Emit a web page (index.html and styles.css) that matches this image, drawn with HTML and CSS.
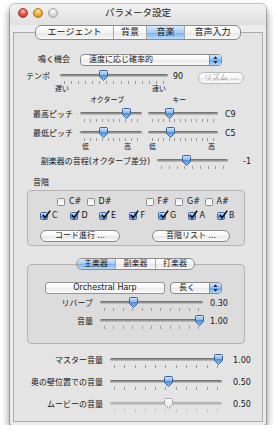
FILE: index.html
```html
<!DOCTYPE html>
<html lang="ja">
<head>
    <meta charset="UTF-8">
    <title>パラメータ設定</title>
    <link rel="stylesheet" href="styles.css">
</head>
<body>
    <!-- shared gradients for slider knobs -->
    <svg class="defs" width="0" height="0">
        <defs>
            <linearGradient id="kb" x1="0" y1="0" x2="0" y2="1">
                <stop offset="0" stop-color="#d6e8fb"/>
                <stop offset="0.45" stop-color="#86b7ee"/>
                <stop offset="0.5" stop-color="#4d8ee0"/>
                <stop offset="1" stop-color="#9ccaf6"/>
            </linearGradient>
            <linearGradient id="kg" x1="0" y1="0" x2="0" y2="1">
                <stop offset="0" stop-color="#ffffff"/>
                <stop offset="1" stop-color="#e2e2e2"/>
            </linearGradient>
        </defs>
    </svg>

    <div class="window">
        <div class="titlebar">
            <div class="lights">
                <span class="light red"></span>
                <span class="light yellow"></span>
                <span class="light gray"></span>
            </div>
            <div class="title">パラメータ設定</div>
            <div></div>
        </div>

        <div class="seg main-tabs">
            <span class="t-agent">エージェント</span>
            <span class="t-bg">背景</span>
            <span class="t-music on">音楽</span>
            <span class="t-voice">音声入力</span>
        </div>

        <div class="pane">
            <!-- 鳴く機会 -->
            <div class="row row-chance">
                <span class="lbl">鳴く機会</span>
                <div class="popup p-chance">
                    <span>速度に応じ確率的</span>
                    <i class="arrows"><svg viewBox="0 0 5 8" width="5" height="8"><path d="M2.5 0.3 L4.6 3 H0.4Z M0.4 5 H4.6 L2.5 7.7Z"/></svg></i>
                </div>
            </div>

            <!-- テンポ -->
            <div class="row row-tempo">
                <span class="lbl">テンポ</span>
                <div class="slider s-tempo">
                    <div class="track"></div>
                    <div class="rail">
                        <div class="ticks"><i></i><i></i><i></i><i></i><i></i><i></i><i></i><i></i><i></i><i></i><i></i><i></i><i></i><i></i><i></i></div>
                        <svg class="thumb" style="left:39%" viewBox="0 0 9 11"><path d="M1.5 0.5 H7.5 Q8.5 0.5 8.5 1.5 V6.5 L4.5 10.5 L0.5 6.5 V1.5 Q0.5 0.5 1.5 0.5Z"/></svg>
                    </div>
                </div>
                <span class="val v-tempo">90</span>
                <span class="pill off b-rhythm">リズム ...</span>
            </div>
            <div class="cap cap-speed"><span>遅い</span><span>速い</span></div>
            <div class="cap cap-pitch"><span>オクターブ</span><span>キー</span></div>

            <!-- ピッチ -->
            <div class="row row-pitch">
                <span class="lbl">最高ピッチ</span>
                <div class="slider s-oct">
                    <div class="track"></div>
                    <div class="rail">
                        <div class="ticks"><i></i><i></i><i></i><i></i><i></i><i></i><i></i><i></i><i></i><i></i></div>
                        <svg class="thumb" style="left:78%" viewBox="0 0 9 11"><path d="M1.5 0.5 H7.5 Q8.5 0.5 8.5 1.5 V6.5 L4.5 10.5 L0.5 6.5 V1.5 Q0.5 0.5 1.5 0.5Z"/></svg>
                    </div>
                </div>
                <div class="slider s-key">
                    <div class="track"></div>
                    <div class="rail">
                        <div class="ticks"><i></i><i></i><i></i><i></i><i></i><i></i><i></i><i></i><i></i><i></i><i></i><i></i></div>
                        <svg class="thumb" style="left:27%" viewBox="0 0 9 11"><path d="M1.5 0.5 H7.5 Q8.5 0.5 8.5 1.5 V6.5 L4.5 10.5 L0.5 6.5 V1.5 Q0.5 0.5 1.5 0.5Z"/></svg>
                    </div>
                </div>
                <span class="val v-pitch">C9</span>
            </div>
            <div class="row row-pitch">
                <span class="lbl">最低ピッチ</span>
                <div class="slider s-oct">
                    <div class="track"></div>
                    <div class="rail">
                        <div class="ticks"><i></i><i></i><i></i><i></i><i></i><i></i><i></i><i></i><i></i><i></i></div>
                        <svg class="thumb" style="left:35%" viewBox="0 0 9 11"><path d="M1.5 0.5 H7.5 Q8.5 0.5 8.5 1.5 V6.5 L4.5 10.5 L0.5 6.5 V1.5 Q0.5 0.5 1.5 0.5Z"/></svg>
                    </div>
                </div>
                <div class="slider s-key">
                    <div class="track"></div>
                    <div class="rail">
                        <div class="ticks"><i></i><i></i><i></i><i></i><i></i><i></i><i></i><i></i><i></i><i></i><i></i><i></i></div>
                        <svg class="thumb" style="left:29%" viewBox="0 0 9 11"><path d="M1.5 0.5 H7.5 Q8.5 0.5 8.5 1.5 V6.5 L4.5 10.5 L0.5 6.5 V1.5 Q0.5 0.5 1.5 0.5Z"/></svg>
                    </div>
                </div>
                <span class="val v-pitch">C5</span>
            </div>
            <div class="cap cap-lowhigh"><span>低</span><span>高</span><span>低</span><span>高</span></div>

            <!-- 副楽器 -->
            <div class="row row-sub">
                <span class="lbl">副楽器の音程(オクターブ差分)</span>
                <div class="slider s-sub">
                    <div class="track"></div>
                    <div class="rail">
                        <div class="ticks"><i></i><i></i><i></i><i></i><i></i><i></i><i></i><i></i><i></i></div>
                        <svg class="thumb" style="left:40%" viewBox="0 0 9 11"><path d="M1.5 0.5 H7.5 Q8.5 0.5 8.5 1.5 V6.5 L4.5 10.5 L0.5 6.5 V1.5 Q0.5 0.5 1.5 0.5Z"/></svg>
                    </div>
                </div>
                <span class="val v-sub">-1</span>
            </div>

            <!-- 音階 -->
            <div class="group-title">音階</div>
            <div class="group">
                <div class="keys black">
                    <label class="cb"><span class="box"></span>C#</label>
                    <label class="cb"><span class="box"></span>D#</label>
                    <span></span>
                    <label class="cb"><span class="box"></span>F#</label>
                    <label class="cb"><span class="box"></span>G#</label>
                    <label class="cb"><span class="box"></span>A#</label>
                </div>
                <div class="keys white">
                    <label class="cb on"><span class="box"><svg viewBox="0 0 10 10"><path d="M1.8 4.6 L4 7.8 L9.2 0.6"/></svg></span>C</label>
                    <label class="cb on"><span class="box"><svg viewBox="0 0 10 10"><path d="M1.8 4.6 L4 7.8 L9.2 0.6"/></svg></span>D</label>
                    <label class="cb on"><span class="box"><svg viewBox="0 0 10 10"><path d="M1.8 4.6 L4 7.8 L9.2 0.6"/></svg></span>E</label>
                    <label class="cb on"><span class="box"><svg viewBox="0 0 10 10"><path d="M1.8 4.6 L4 7.8 L9.2 0.6"/></svg></span>F</label>
                    <label class="cb on"><span class="box"><svg viewBox="0 0 10 10"><path d="M1.8 4.6 L4 7.8 L9.2 0.6"/></svg></span>G</label>
                    <label class="cb on"><span class="box"><svg viewBox="0 0 10 10"><path d="M1.8 4.6 L4 7.8 L9.2 0.6"/></svg></span>A</label>
                    <label class="cb on"><span class="box"><svg viewBox="0 0 10 10"><path d="M1.8 4.6 L4 7.8 L9.2 0.6"/></svg></span>B</label>
                </div>
                <div class="group-buttons">
                    <span class="pill b-chord">コード進行 ...</span>
                    <span class="pill b-scale">音階リスト ...</span>
                </div>
            </div>

            <!-- 楽器 -->
            <div class="seg inst-tabs">
                <span class="t-main on">主楽器</span>
                <span class="t-sub">副楽器</span>
                <span class="t-perc">打楽器</span>
            </div>
            <div class="inst-pane">
                <div class="row row-inst">
                    <span class="inst-name">Orchestral Harp</span>
                    <div class="popup p-len">
                        <span>長く</span>
                        <i class="arrows"><svg viewBox="0 0 5 8" width="5" height="8"><path d="M2.5 0.3 L4.6 3 H0.4Z M0.4 5 H4.6 L2.5 7.7Z"/></svg></i>
                    </div>
                </div>
                <div class="row row-inner">
                    <span class="lbl">リバーブ</span>
                    <div class="slider s-inner">
                        <div class="track"></div>
                        <div class="rail">
                            <div class="ticks"><i></i><i></i><i></i><i></i><i></i><i></i><i></i><i></i><i></i><i></i><i></i></div>
                            <svg class="thumb" style="left:30%" viewBox="0 0 9 11"><path d="M1.5 0.5 H7.5 Q8.5 0.5 8.5 1.5 V6.5 L4.5 10.5 L0.5 6.5 V1.5 Q0.5 0.5 1.5 0.5Z"/></svg>
                        </div>
                    </div>
                    <span class="val v-inner">0.30</span>
                </div>
                <div class="row row-inner">
                    <span class="lbl">音量</span>
                    <div class="slider s-inner">
                        <div class="track"></div>
                        <div class="rail">
                            <div class="ticks"><i></i><i></i><i></i><i></i><i></i><i></i><i></i><i></i><i></i><i></i><i></i></div>
                            <svg class="thumb" style="left:100%" viewBox="0 0 9 11"><path d="M1.5 0.5 H7.5 Q8.5 0.5 8.5 1.5 V6.5 L4.5 10.5 L0.5 6.5 V1.5 Q0.5 0.5 1.5 0.5Z"/></svg>
                        </div>
                    </div>
                    <span class="val v-inner">1.00</span>
                </div>
            </div>

            <!-- 全体の音量 -->
            <div class="row row-vol first">
                <span class="lbl">マスター音量</span>
                <div class="slider s-vol">
                    <div class="track"></div>
                    <div class="rail">
                        <div class="ticks"><i></i><i></i><i></i><i></i><i></i><i></i><i></i><i></i><i></i><i></i><i></i></div>
                        <svg class="thumb" style="left:100%" viewBox="0 0 9 11"><path d="M1.5 0.5 H7.5 Q8.5 0.5 8.5 1.5 V6.5 L4.5 10.5 L0.5 6.5 V1.5 Q0.5 0.5 1.5 0.5Z"/></svg>
                    </div>
                </div>
                <span class="val v-vol">1.00</span>
            </div>
            <div class="row row-vol">
                <span class="lbl">奥の壁位置での音量</span>
                <div class="slider s-vol">
                    <div class="track"></div>
                    <div class="rail">
                        <div class="ticks"><i></i><i></i><i></i><i></i><i></i><i></i><i></i><i></i><i></i><i></i><i></i></div>
                        <svg class="thumb" style="left:52%" viewBox="0 0 9 11"><path d="M1.5 0.5 H7.5 Q8.5 0.5 8.5 1.5 V6.5 L4.5 10.5 L0.5 6.5 V1.5 Q0.5 0.5 1.5 0.5Z"/></svg>
                    </div>
                </div>
                <span class="val v-vol">0.50</span>
            </div>
            <div class="row row-vol">
                <span class="lbl">ムービーの音量</span>
                <div class="slider s-vol disabled">
                    <div class="track"></div>
                    <div class="rail">
                        <div class="ticks"><i></i><i></i><i></i><i></i><i></i><i></i><i></i><i></i><i></i><i></i><i></i></div>
                        <svg class="thumb" style="left:52%" viewBox="0 0 9 11"><path d="M1.5 0.5 H7.5 Q8.5 0.5 8.5 1.5 V6.5 L4.5 10.5 L0.5 6.5 V1.5 Q0.5 0.5 1.5 0.5Z"/></svg>
                    </div>
                </div>
                <span class="val v-vol">0.50</span>
            </div>
        </div>
    </div>
</body>
</html>
```

FILE: styles.css
```css
body {
    margin: 0;
    background: #fff;
    font-family: "DejaVu Sans", "Noto Sans CJK JP", sans-serif;
    font-size: 8px;
    color: #151515;
}
.defs {
    position: absolute;
}

/* window frame */
.window {
    width: 256px;
    height: 421px;
    margin: 4px 0 0 10px;
    background: #ececec;
    border-radius: 5px 5px 2px 2px;
    box-shadow: 0 0 0 1px rgba(0,0,0,0.2), 0 5px 9px rgba(0,0,0,0.55);
}
.titlebar {
    height: 21px;
    display: grid;
    grid-template-columns: 1fr auto 1fr;
    background: linear-gradient(#f2f2f2, #e0e0e0);
    border-radius: 5px 5px 0 0;
}
.lights {
    display: flex;
    gap: 5px;
    padding: 4px 0 0 8px;
}
.light {
    width: 10px;
    height: 10px;
    border-radius: 50%;
    box-sizing: border-box;
}
.light.red {
    background: radial-gradient(circle at 50% 30%, #ffc2b8 0, #e8594d 45%, #b8261c 100%);
    border: 1px solid #9e3a32;
}
.light.yellow {
    background: radial-gradient(circle at 50% 30%, #ffe6a8 0, #f0b43a 45%, #c47d10 100%);
    border: 1px solid #a47624;
}
.light.gray {
    background: radial-gradient(circle at 50% 30%, #ffffff 0, #dadada 50%, #b8b8b8 100%);
    border: 1px solid #a3a3a3;
}
.title {
    font-size: 9.5px;
    line-height: 13px;
    padding-top: 2px;
    color: #222;
}

/* segmented tabs */
.seg {
    display: flex;
    box-sizing: border-box;
    border: 1px solid #8a8a8a;
    border-radius: 6px;
    overflow: hidden;
    background: linear-gradient(#ffffff, #f3f3f3 50%, #e5e5e5 51%, #f8f8f8);
    position: relative;
    z-index: 1;
}
.seg span {
    flex: none;
    box-sizing: border-box;
    text-align: center;
    border-left: 1px solid #a8a8a8;
}
.seg span:first-child {
    border-left: none;
}
.seg .on {
    background: linear-gradient(#d9eafc, #a2caf3 50%, #78b0ee 51%, #b9dbf8);
}
.main-tabs {
    width: 206px;
    height: 15px;
    margin: 0 0 -8px 25px;
    font-size: 9px;
    line-height: 13px;
}
.t-agent { width: 77px; }
.t-bg { width: 33px; }
.t-music { width: 38px; }
.t-voice { width: 56px; }

.pane {
    height: 390px;
    box-sizing: border-box;
    margin: 0 3px;
    border: 1px solid #ababab;
    background: #e4e4e4;
    padding-top: 21px;
}

/* rows */
.row {
    display: flex;
    align-items: flex-start;
    line-height: 12px;
}
.lbl {
    flex: none;
    text-align: right;
    white-space: nowrap;
}
.val {
    flex: none;
    white-space: nowrap;
}

.row-chance { height: 12px; }
.row-chance .lbl { width: 56px; }
.p-chance { width: 142px; margin-left: 10px; }

.row-tempo { height: 14px; margin-top: 5px; }
.row-tempo .lbl { width: 36px; }
.s-tempo { width: 108px; margin-left: 10px; }
.v-tempo { width: 25px; margin-left: 5px; }
.b-rhythm { width: 46px; margin-top: 1px; }

.cap {
    display: flex;
    height: 8px;
    font-size: 7px;
    line-height: 8px;
}
.cap-speed { padding-left: 41px; }
.cap-speed span + span { margin-left: 83px; }
.cap-pitch { padding-left: 76px; margin-top: 3px; }
.cap-pitch span + span { margin-left: 48px; }
.cap-lowhigh { padding-left: 68px; margin-top: 1px; }
.cap-lowhigh span:nth-child(2) { margin-left: 35px; }
.cap-lowhigh span:nth-child(3) { margin-left: 18px; }
.cap-lowhigh span:nth-child(4) { margin-left: 52px; }

.row-pitch { height: 14px; margin-top: 5px; }
.row-pitch .lbl { width: 59px; }
.s-oct { width: 62px; margin-left: 7px; }
.s-key { width: 70px; margin-left: 6px; }
.v-pitch { margin-left: 7px; }

.row-sub { height: 14px; margin-top: 5px; }
.row-sub .lbl { width: 136px; }
.s-sub { width: 71px; margin-left: 7px; }
.v-sub { margin-left: 15px; }

/* slider */
.slider {
    position: relative;
    height: 14px;
    flex: none;
}
.track {
    position: absolute;
    left: 0;
    right: 0;
    top: 3px;
    height: 3px;
    border-radius: 2px;
    background: linear-gradient(#646464, #a6a6a6 70%, #d2d2d2);
}
.rail {
    position: absolute;
    left: 4px;
    right: 4px;
    top: 0;
    bottom: 0;
}
.ticks {
    position: absolute;
    left: 0;
    right: 0;
    top: 10px;
    display: flex;
    justify-content: space-between;
}
.ticks i {
    width: 1px;
    height: 3px;
    background: #9a9a9a;
}
.thumb {
    position: absolute;
    top: -1px;
    width: 9px;
    height: 11px;
    margin-left: -4px;
}
.thumb path {
    fill: url(#kb);
    stroke: #3d6194;
    stroke-width: 1;
}
.slider.disabled .track {
    background: linear-gradient(#a8a8a8, #cccccc);
}
.slider.disabled .ticks i {
    background: #c4c4c4;
}
.slider.disabled .thumb path {
    fill: url(#kg);
    stroke: #a8a8a8;
}

/* popup menu */
.popup {
    display: flex;
    height: 12px;
    box-sizing: border-box;
    border: 1px solid #8a8a8a;
    border-radius: 4px;
    overflow: hidden;
    background: linear-gradient(#ffffff, #f4f4f4 50%, #e8e8e8 51%, #fbfbfb);
    flex: none;
}
.popup span {
    flex: 1;
    padding-left: 8px;
    line-height: 10px;
    white-space: nowrap;
}
.popup .arrows {
    width: 11px;
    display: flex;
    align-items: center;
    justify-content: center;
    border-left: 1px solid #6d8cb8;
    background: linear-gradient(#d2e6fb, #92c0f1 50%, #6aa6ea 51%, #b3d6f8);
}
.popup .arrows path {
    fill: #1d2a3d;
}

/* buttons */
.pill {
    display: block;
    height: 12px;
    box-sizing: border-box;
    border: 1px solid #8a8a8a;
    border-radius: 6px;
    background: linear-gradient(#ffffff, #f5f5f5 50%, #e6e6e6 51%, #fbfbfb);
    text-align: center;
    line-height: 10px;
    flex: none;
    white-space: nowrap;
}
.pill.off {
    color: #a9a9a9;
    border-color: #b9b9b9;
}

/* 音階 group */
.group-title {
    padding-left: 19px;
    margin-top: 9px;
    height: 8px;
    line-height: 8px;
}
.group {
    width: 218px;
    margin: 3px 0 0 13px;
    box-sizing: border-box;
    border: 1px solid #b3b3b3;
    border-radius: 4px;
    background: rgba(0,0,0,0.03);
    padding: 7px 0 3px;
}
.keys {
    display: grid;
    grid-template-columns: repeat(7, 29.5px);
    height: 8px;
    line-height: 8px;
}
.keys.black { padding-left: 29px; }
.keys.white { padding-left: 12px; margin-top: 6px; }
.cb {
    display: flex;
    align-items: center;
    gap: 4px;
    white-space: nowrap;
}
.box {
    position: relative;
    width: 8px;
    height: 8px;
    box-sizing: border-box;
    border: 1px solid #8c8c8c;
    border-radius: 1.5px;
    background: linear-gradient(#eeeeee, #ffffff);
    flex: none;
}
.cb.on .box {
    border-color: #3f6499;
    background: linear-gradient(#d3e5fb, #78aeec 50%, #3f82dc 55%, #94c4f5);
}
.box svg {
    position: absolute;
    left: -0.5px;
    top: -3px;
    width: 10px;
    height: 10px;
}
.box svg path {
    fill: none;
    stroke: #111;
    stroke-width: 1.6;
}
.group-buttons {
    display: flex;
    padding-left: 12px;
    margin-top: 10px;
}
.b-chord { width: 80px; }
.b-scale { width: 78px; margin-left: 32px; }

/* 楽器 tabs */
.inst-tabs {
    width: 119px;
    height: 12px;
    margin: 12px 0 -6px 62px;
    line-height: 10px;
}
.t-main { width: 38px; }
.t-sub { width: 40px; }
.t-perc { width: 39px; }
.inst-pane {
    width: 218px;
    margin-left: 13px;
    box-sizing: border-box;
    border: 1px solid #b3b3b3;
    border-radius: 4px;
    background: rgba(0,0,0,0.03);
    padding: 17px 0 13px;
}
.row-inst { height: 12px; }
.inst-name {
    width: 120px;
    height: 12px;
    margin-left: 17px;
    box-sizing: border-box;
    border: 1px solid #949494;
    border-radius: 3px;
    background: linear-gradient(#ffffff, #f6f6f6 50%, #ececec 51%, #fbfbfb);
    text-align: center;
    line-height: 10px;
}
.p-len { width: 52px; margin-left: 5px; }
.row-inner { height: 14px; margin-top: 4px; }
.row-inner .lbl { width: 65px; }
.s-inner { width: 103px; margin-left: 7px; }
.v-inner { margin-left: 7px; }

/* 音量 */
.row-vol { height: 14px; margin-top: 8px; }
.row-vol.first { margin-top: 11px; }
.row-vol .lbl { width: 89px; }
.s-vol { width: 112px; margin-left: 7px; }
.v-vol { margin-left: 11px; }
```
